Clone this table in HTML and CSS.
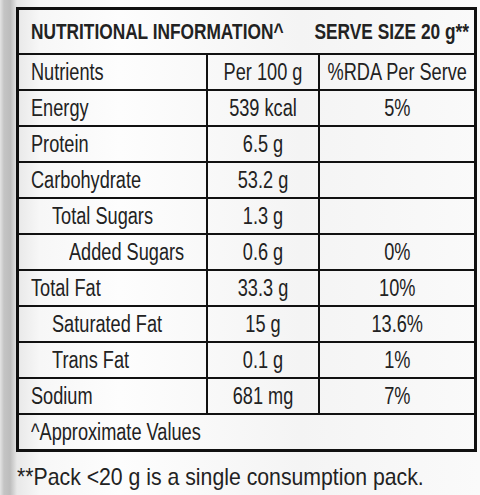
FILE: index.html
```html
<!DOCTYPE html>
<html lang="en">
<head>
    <meta charset="UTF-8">
    <title>Nutritional Information</title>
    <link rel="stylesheet" href="styles.css">
</head>
<body>
    <table class="facts">
        <colgroup>
            <col class="col-name">
            <col class="col-value">
            <col class="col-rda">
        </colgroup>
        <tr class="head">
            <th colspan="3">
                <div class="head-row">
                    <span>NUTRITIONAL INFORMATION^</span>
                    <span>SERVE SIZE 20 g**</span>
                </div>
            </th>
        </tr>
        <tr><td><div class="c">Nutrients</div></td><td class="num"><div class="c">Per 100 g</div></td><td class="num"><div class="c">%RDA Per Serve</div></td></tr>
        <tr><td><div class="c">Energy</div></td><td class="num"><div class="c">539 kcal</div></td><td class="num"><div class="c">5%</div></td></tr>
        <tr><td><div class="c">Protein</div></td><td class="num"><div class="c">6.5 g</div></td><td class="num"></td></tr>
        <tr><td><div class="c">Carbohydrate</div></td><td class="num"><div class="c">53.2 g</div></td><td class="num"></td></tr>
        <tr><td class="sub"><div class="c">Total Sugars</div></td><td class="num"><div class="c">1.3 g</div></td><td class="num"></td></tr>
        <tr><td class="sub2"><div class="c">Added Sugars</div></td><td class="num"><div class="c">0.6 g</div></td><td class="num"><div class="c">0%</div></td></tr>
        <tr><td><div class="c">Total Fat</div></td><td class="num"><div class="c">33.3 g</div></td><td class="num"><div class="c">10%</div></td></tr>
        <tr><td class="sub"><div class="c">Saturated Fat</div></td><td class="num"><div class="c">15 g</div></td><td class="num"><div class="c">13.6%</div></td></tr>
        <tr><td class="sub"><div class="c">Trans Fat</div></td><td class="num"><div class="c">0.1 g</div></td><td class="num"><div class="c">1%</div></td></tr>
        <tr><td><div class="c">Sodium</div></td><td class="num"><div class="c">681 mg</div></td><td class="num"><div class="c">7%</div></td></tr>
        <tr><td colspan="3"><div class="c">^Approximate Values</div></td></tr>
    </table>
    <div class="note-wrap">
        <p class="note">**Pack &lt;20 g is a single consumption pack.</p>
    </div>
</body>
</html>
```

FILE: styles.css
```css
body {
    margin: 0;
    padding: 7px 6px 0 16px;
    height: 495px;
    box-sizing: border-box;
    font-family: "Liberation Sans", Arial, sans-serif;
    color: #222;
    background: linear-gradient(to right, #e4e4e4 0px, #c4c4c4 4px, #bdbdbd 10px, #e8e8e8 17px, #f7f7f7 40px, #fdfdfd 120px, #f4f4f4 300px, #fafafa 480px);
    overflow: hidden;
}
.facts {
    width: 458px;
    border-collapse: collapse;
    border: 3px solid #111;
    table-layout: fixed;
}
.col-name {
    width: 189px;
}
.col-value {
    width: 112px;
}
.col-rda {
    width: 157px;
}
.facts td {
    border: 2px solid #111;
    height: 34px;
    padding: 0 0 0 12px;
    font-size: 23px;
    line-height: 34px;
    white-space: nowrap;
    overflow: hidden;
}
/* the label face is a condensed grotesque: squeeze the text boxes */
.c {
    width: 126.6%;
    transform: scaleX(0.79);
    transform-origin: left center;
}
.facts td.num {
    text-align: center;
    padding: 0;
}
.facts td.sub {
    padding-left: 33px;
}
.facts td.sub2 {
    padding-left: 50px;
}
.head th {
    border: 2px solid #111;
    height: 43px;
    padding: 0 5px 0 12px;
    font-weight: bold;
    font-size: 22px;
    white-space: nowrap;
    overflow: hidden;
}
.head-row {
    display: flex;
    justify-content: space-between;
    align-items: center;
    width: 127.2%;
    transform: scaleX(0.786);
    transform-origin: left center;
}
.note-wrap {
    margin: 11px 0 0 1px;
    width: 458px;
    overflow: hidden;
}
.note {
    margin: 0;
    font-size: 24px;
    white-space: nowrap;
    width: 113%;
    transform: scaleX(0.885);
    transform-origin: left center;
}
```
